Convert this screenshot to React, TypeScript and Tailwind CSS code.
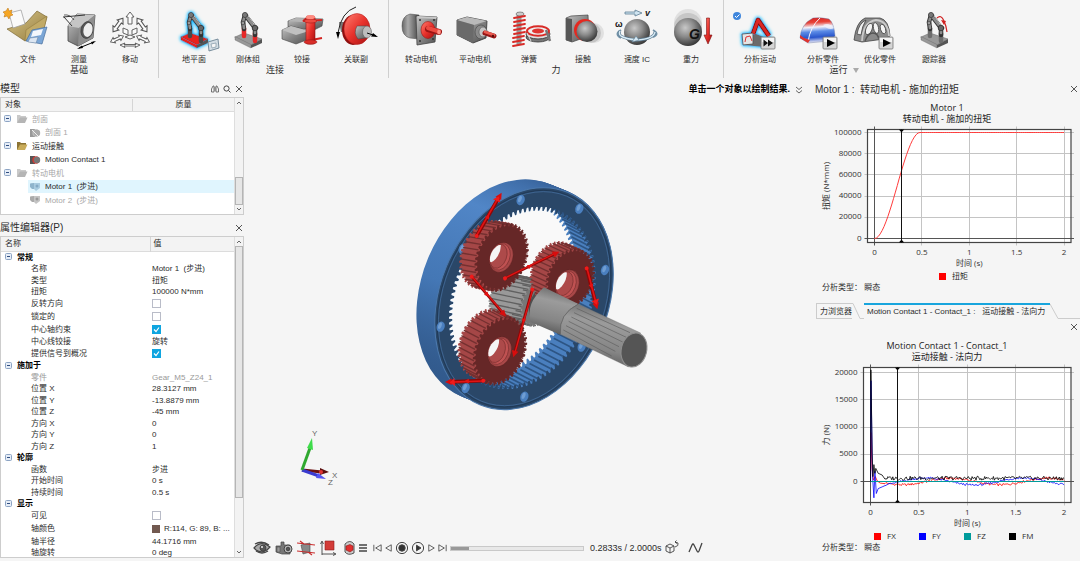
import { useState } from "react";
import type { ReactNode } from "react";
import clsx from "clsx";

type Tool = { label: string; icon: ReactNode; width?: string };
type Group = { title: string; tools: Tool[]; className: string; more?: boolean };
type Point = [number, number];

type TreeItem = {
  label: string;
  kind: "folder" | "section" | "contact" | "motor";
  muted?: boolean;
  selected?: boolean;
};

type Property = {
  name: string;
  value?: string;
  checked?: boolean;
  header?: boolean;
  muted?: boolean;
  swatch?: boolean;
};

const TREE: TreeItem[] = [
  { label: "剖面", kind: "folder", muted: true },
  { label: "剖面 1", kind: "section", muted: true },
  { label: "运动接触", kind: "folder" },
  { label: "Motion Contact 1", kind: "contact" },
  { label: "转动电机", kind: "folder", muted: true },
  { label: "Motor 1\u00a0 (步进)", kind: "motor", selected: true },
  { label: "Motor 2\u00a0 (步进)", kind: "motor", muted: true },
];

const PROPERTIES: Property[] = [
  { name: "常规", header: true },
  { name: "名称", value: "Motor 1\u00a0 (步进)" },
  { name: "类型", value: "扭矩" },
  { name: "扭矩", value: "100000 N*mm" },
  { name: "反转方向", checked: false },
  { name: "锁定的", checked: false },
  { name: "中心轴约束", checked: true },
  { name: "中心线铰接", value: "旋转" },
  { name: "提供信号到概况", checked: true },
  { name: "施加于", header: true },
  { name: "零件", value: "Gear_M5_Z24_1", muted: true },
  { name: "位置 X", value: "28.3127 mm" },
  { name: "位置 Y", value: "-13.8879 mm" },
  { name: "位置 Z", value: "-45 mm" },
  { name: "方向 X", value: "0" },
  { name: "方向 Y", value: "0" },
  { name: "方向 Z", value: "1" },
  { name: "轮廓", header: true },
  { name: "函数", value: "步进" },
  { name: "开始时间", value: "0 s" },
  { name: "持续时间", value: "0.5 s" },
  { name: "显示", header: true },
  { name: "可见", checked: false },
  { name: "轴颜色", value: "R:114, G: 89, B: ...", swatch: true },
  { name: "轴半径", value: "44.1716 mm" },
  { name: "轴旋转", value: "0 deg" },
];

// Gradients shared by every icon
function SharedDefs() {
  return (
    <svg className="absolute h-0 w-0" aria-hidden="true">
      <defs>
        <linearGradient id="metal" x1="0" y1="0" x2="1" y2="1">
          <stop offset="0" stopColor="#c4c4c4" />
          <stop offset="0.5" stopColor="#858585" />
          <stop offset="1" stopColor="#505050" />
        </linearGradient>
        <linearGradient id="metalX" x1="0" y1="0" x2="1" y2="0">
          <stop offset="0" stopColor="#666" />
          <stop offset="0.35" stopColor="#aaa" />
          <stop offset="1" stopColor="#444" />
        </linearGradient>
        <linearGradient id="red" x1="0" y1="0" x2="1" y2="1">
          <stop offset="0" stopColor="#ff8072" />
          <stop offset="0.5" stopColor="#e8322c" />
          <stop offset="1" stopColor="#a50f0f" />
        </linearGradient>
        <linearGradient id="gold" x1="0" y1="0" x2="1" y2="1">
          <stop offset="0" stopColor="#d9c88c" />
          <stop offset="1" stopColor="#93793a" />
        </linearGradient>
        <linearGradient id="heat" x1="0.1" y1="0" x2="0.2" y2="1">
          <stop offset="0" stopColor="#d81e1c" />
          <stop offset="0.22" stopColor="#e8453a" />
          <stop offset="0.4" stopColor="#f2f2fa" />
          <stop offset="0.58" stopColor="#5b8be6" />
          <stop offset="0.8" stopColor="#2a56cc" />
          <stop offset="1" stopColor="#e6e6f4" />
        </linearGradient>
        <radialGradient id="ball" cx="0.4" cy="0.35" r="0.65">
          <stop offset="0" stopColor="#c8c8c8" />
          <stop offset="0.5" stopColor="#8a8a8a" />
          <stop offset="1" stopColor="#3c3c3c" />
        </radialGradient>
        <filter id="glow" x="-40%" y="-40%" width="180%" height="180%">
          <feDropShadow dx="0" dy="0" stdDeviation="1.5" floodColor="#00b4ff" />
          <feDropShadow dx="0" dy="0" stdDeviation="1.5" floodColor="#3cc8ff" />
        </filter>
      </defs>
    </svg>
  );
}

function ToolSvg({ children }: { children: ReactNode }) {
  return (
    <svg viewBox="0 0 48 44" className="h-11 w-12 overflow-visible" aria-hidden="true">
      {children}
    </svg>
  );
}

function RobotArm({ base, legs }: { base: string; legs: string }) {
  return (
    <g strokeLinejoin="round" strokeLinecap="round">
      <path d="M11 29 20 25 38 31 27 37Z" fill={base} stroke="#555" strokeWidth=".4" />
      <path d="M11 29v3l16 8v-3z" fill={base} stroke="#444" strokeWidth=".3" />
      <path d="M27 37v3l11-5v-4z" fill="#555" />
      <path d="M20 28v-8M31 33v-8" stroke={legs} strokeWidth="4.5" />
      <path d="M20 21 19 14 21 7 31 20v7" stroke="#333" strokeWidth="4.5" fill="none" />
      <path d="M20 20 19 14 21 7 31 20v5" stroke="#8c8c8c" strokeWidth="2.6" fill="none" />
      <path d="m20 6 2-1 10 14" stroke="#bbb" strokeWidth="1" fill="none" />
      <circle cx="21" cy="7" r="2.6" fill="#777" stroke="#333" strokeWidth=".7" />
      <circle cx="19" cy="15" r="1.8" fill="#999" stroke="#333" strokeWidth=".6" />
      <circle cx="31" cy="20" r="2.8" fill="#666" stroke="#222" strokeWidth=".7" />
    </g>
  );
}

function PlayBox({ x, fast }: { x: number; fast?: boolean }) {
  return (
    <g transform={`translate(${x} 29)`}>
      <rect width="14" height="12" rx="1" fill="#d5d5d5" stroke="#777" strokeWidth=".8" />
      <rect x="1" y="1" width="12" height="4" fill="#f4f4f4" />
      {fast ? (
        <path d="M2.5 2.5 7 6 2.5 9.500zM7 2.500 12 6 7 9.500z" fill="#111" />
      ) : (
        <path d="M4 2 12 6 4 10z" fill="#000" />
      )}
    </g>
  );
}

const OUTLINE_ARROW = "M0-7 3-3H1.300V3H3L0 7-3 3H-1.300V-3H-3Z";

const fileIcon = (
  <ToolSvg>
    <path d="M3 21 22 15 33 3 43 9 40 20 21 33Z" fill="url(#gold)" stroke="#7d6935" strokeWidth=".7" />
    <path d="M22 22 43 8 40 21 21 33Z" fill="#c1aa67" stroke="#8b7439" strokeWidth=".5" />
    <path d="M22 33 28 22 43 19 38 36Z" fill="#7ba6d6" stroke="#476f9e" strokeWidth=".7" />
    <path d="M29 23 39 21 37 27 27 29Z" fill="#f3f7fc" />
    <path d="M26 30 34 29 32 35 24 34Z" fill="#dce6f2" stroke="#56718f" strokeWidth=".4" />
    <path d="M5 5 17 2 21 16 9 20Z" fill="#fafafa" stroke="#999" strokeWidth=".7" />
    <path d="m4 0 1 3 3-1-1 3 2 2-3 1-1 3-2-3-3 1 1-3-2-2 3-1z" fill="#f6a623" stroke="#b86e0a" strokeWidth=".5" />
  </ToolSvg>
);

const measureIcon = (
  <ToolSvg>
    <path d="M13 18 22 6 40 7 38 30 23 38 13 33Z" fill="url(#metal)" stroke="#444" strokeWidth=".8" />
    <path d="M13 18 22 6 40 7 24 20Z" fill="#c5c5c5" />
    <path d="M24 20 40 7 38 30 23 38Z" fill="#8f8f8f" />
    <ellipse cx="32" cy="22" rx="6" ry="8.500" fill="#555" stroke="#333" strokeWidth=".6" transform="rotate(12 32 22)" />
    <ellipse cx="33" cy="22" rx="4.500" ry="7" fill="#eee" transform="rotate(12 33 22)" />
    <path d="M8 9 30 7M9 9l8 9" stroke="#222" strokeWidth=".9" fill="none" />
    <path d="M9 7q6-1 10 5" stroke="#222" strokeWidth=".7" fill="none" />
    <path d="M24 40 39 34" stroke="#000" strokeWidth="1" />
    <path d="m22 41 5-3.500 1 2.500zM41 33l-5 1 1 2.500z" />
  </ToolSvg>
);

const moveIcon = (
  <ToolSvg>
    <g fill="#fbfbfb" stroke="#555" strokeWidth=".9">
      <path d="M24 4 28 9H26V16H22V9H20Z" />
      <path d={OUTLINE_ARROW} transform="translate(12 17) rotate(36) scale(1.2)" />
      <path d={OUTLINE_ARROW} transform="translate(36 17) rotate(-36) scale(1.2)" />
      <path d={OUTLINE_ARROW} transform="translate(11 31) rotate(66)" />
      <path d={OUTLINE_ARROW} transform="translate(37 31) rotate(-66)" />
      <path d="M14 37 19 35 18 36.500H30L29 35 34 37 29 39.500 30 38H18L19 39.500Z" />
      <path d="M17 20 22 22V27L17 25ZM31 20 26 22V27L31 25Z" />
      <path d="M19 29 24 27 29 29 24 31Z" />
    </g>
  </ToolSvg>
);

const groundIcon = (
  <ToolSvg>
    <g filter="url(#glow)">
      <RobotArm base="#e8201f" legs="#4a4a4a" />
    </g>
    <path d="M38 34 48 31 49 40 39 43Z" fill="#d3dde4" stroke="#6d8494" strokeWidth=".9" />
    <path d="m41 36 5-1v4l-4 1z" fill="#f6f6f6" stroke="#8097a5" strokeWidth=".7" />
  </ToolSvg>
);

const rigidIcon = (
  <ToolSvg>
    <RobotArm base="#999" legs="#e52828" />
  </ToolSvg>
);

const hingeIcon = (
  <ToolSvg>
    <path d="M10 13 18 10 45 11 44 18 36 22 10 19Z" fill="url(#metal)" stroke="#444" strokeWidth=".6" />
    <path d="M10 13 18 10 45 11 36 15Z" fill="#b4b4b4" />
    <path d="M4 22 13 18 31 23 31 31 18 36 4 31Z" fill="url(#metal)" stroke="#444" strokeWidth=".6" />
    <path d="M4 22 13 18 31 23 18 27Z" fill="#c0c0c0" />
    <path d="M30 10q-6 3-4 3l18-1M28 33l16-3" stroke="#d3221f" strokeWidth="2" fill="none" />
    <rect x="28" y="8" width="9" height="28" rx="2" fill="url(#red)" stroke="#921212" strokeWidth=".6" />
    <ellipse cx="32.500" cy="13" rx="6.500" ry="2" fill="#ed4a40" stroke="#921212" strokeWidth=".5" />
    <ellipse cx="32.500" cy="34" rx="6.500" ry="2.200" fill="#d82d28" stroke="#921212" strokeWidth=".5" />
    <ellipse cx="32.500" cy="9" rx="4.500" ry="2" fill="#ff8b80" />
  </ToolSvg>
);

const coupleIcon = (
  <ToolSvg>
    <path d="M7 14h8v10H9z" fill="#777" />
    <ellipse cx="21" cy="22" rx="11" ry="15" fill="#8f0e0e" />
    <ellipse cx="25" cy="21" rx="13" ry="15.500" fill="url(#red)" stroke="#b11b1b" strokeWidth=".5" />
    <path d="M25 18 34 18q6 5 0 12l-8 1q-5-6-1-13z" fill="url(#metal)" stroke="#444" strokeWidth=".5" />
    <ellipse cx="35" cy="24" rx="4.500" ry="6" fill="#bdbdbd" stroke="#555" strokeWidth=".5" />
    <path d="M35 25 44 28" stroke="#000" strokeWidth="1" />
    <path d="m46 29-7-.5 2-3.500z" />
    <path d="M24-1Q9 4 6 25" stroke="#222" strokeWidth="1" fill="none" />
    <path d="m6 31-2-7h4z" />
  </ToolSvg>
);

const rotaryIcon = (
  <ToolSvg>
    <path d="M22 7 13 6Q5 8 5 18t8 12l9 1z" fill="url(#metalX)" stroke="#444" strokeWidth=".5" />
    <path d="M19 8 40 9 38 34 20 37Z" fill="url(#metal)" stroke="#444" strokeWidth=".8" strokeLinejoin="round" />
    <path d="m20 8 20 1-1 2-18-1z" fill="#c8c8c8" />
    <circle cx="23" cy="12" r="1" fill="#333" />
    <circle cx="37" cy="12" r="1" fill="#333" />
    <circle cx="23" cy="33" r="1" fill="#333" />
    <circle cx="36" cy="31" r="1" fill="#333" />
    <ellipse cx="31" cy="22" rx="7" ry="8.500" fill="url(#red)" stroke="#9b1414" strokeWidth=".6" />
    <path d="M31 21 42 24" stroke="#9b1414" strokeWidth="6" strokeLinecap="round" />
    <path d="M31 20 42 23.500" stroke="#ec4a40" strokeWidth="4" strokeLinecap="round" />
    <ellipse cx="42" cy="24" rx="1.800" ry="2.600" fill="#ff9488" />
  </ToolSvg>
);

const linearIcon = (
  <ToolSvg>
    <path d="M6 12 16 9 36 13 35 30 22 35 6 27Z" fill="url(#metal)" stroke="#333" strokeWidth=".8" strokeLinejoin="round" />
    <path d="M6 12 16 9 36 13 23 17Z" fill="#b9b9b9" />
    <path d="M6 12 23 17 22 35 6 27Z" fill="#6a6a6a" />
    <ellipse cx="30" cy="24" rx="6" ry="7" fill="#8b8b8b" stroke="#444" strokeWidth=".6" />
    <ellipse cx="32" cy="24" rx="4" ry="5" fill="#c5c5c5" stroke="#555" strokeWidth=".6" />
    <path d="M34 25 43 28" stroke="#971616" strokeWidth="5" strokeLinecap="round" />
    <path d="M34 24 43 27" stroke="#e85a4f" strokeWidth="2.800" strokeLinecap="round" />
    <circle cx="42" cy="28" r="1.200" fill="#5a0a0a" />
  </ToolSvg>
);

const springIcon = (
  <ToolSvg>
    <path d="M14 7V37" stroke="#999" strokeWidth="5" />
    <ellipse cx="15" cy="6" rx="4" ry="2" fill="#ccc" stroke="#555" strokeWidth=".6" />
    <path
      d="M9 10 20 8M9 14 20 12M9 18 20 16M9 22 20 20M9 26 20 24M8 30 19 28M8 34 19 32M8 38 19 36"
      stroke="#d82b27"
      strokeWidth="1.800"
      strokeLinecap="round"
    />
    <ellipse cx="33" cy="29" rx="12" ry="5" fill="#777" stroke="#333" strokeWidth=".8" />
    <ellipse cx="33" cy="26" rx="12" ry="5" fill="#ddd" stroke="#444" strokeWidth="1" />
    <ellipse cx="33" cy="23" rx="11" ry="4.800" fill="#eee" stroke="#d82b27" strokeWidth="2" />
    <ellipse cx="33" cy="23" rx="6" ry="2.500" fill="#e03530" />
    <path d="M41 22 45 33" stroke="#777" strokeWidth="2.500" />
    <path d="m22 25 4 8" stroke="#ddd" strokeWidth="1" />
  </ToolSvg>
);

const contactIcon = (
  <ToolSvg>
    <path d="M7 10 12 8 29 7 30 28 13 34 7 32Z" fill="url(#metal)" stroke="#444" strokeWidth=".7" />
    <path d="M7 10 13 11 13 34 7 32Z" fill="#565656" />
    <circle cx="35" cy="25" r="10" fill="#bbb" opacity=".35" />
    <circle cx="32" cy="25" r="10" fill="#999" opacity=".4" />
    <circle cx="26" cy="22" r="11" fill="#e5281f" />
    <circle cx="28" cy="23.500" r="10.500" fill="url(#ball)" />
  </ToolSvg>
);

const velocityIcon = (
  <ToolSvg>
    <path d="M8 22q-7 4 0 8M40 22q7 4 0 7" stroke="#7292a8" strokeWidth="2" fill="none" />
    <circle cx="24" cy="24" r="13" fill="url(#ball)" />
    <path d="M7 23q-4 7 17 9 17-1 18-8" stroke="#5d7d94" strokeWidth="2.800" fill="none" />
    <path d="M7 23q-4 7 17 9 17-1 18-8" stroke="#d8ebf6" strokeWidth="1.500" fill="none" />
    <path d="m23 28 3 4-7 2z" fill="#d8ebf6" stroke="#5d7d94" strokeWidth=".6" />
    <path d="M12 4H22V2L29 5 22 8V6H12Z" fill="#cfe4f0" stroke="#5d7d94" strokeWidth=".8" />
    <text x="32" y="8" fontSize="9" fontWeight="700" fontStyle="italic" fill="#222">v</text>
    <text x="2" y="19" fontSize="9" fontWeight="700" fill="#222">ω</text>
  </ToolSvg>
);

const gravityIcon = (
  <ToolSvg>
    <circle cx="21" cy="15" r="14" fill="#bbb" opacity=".35" />
    <circle cx="21" cy="19" r="14" fill="#999" opacity=".35" />
    <circle cx="21" cy="24" r="14" fill="url(#ball)" />
    <text x="22" y="31" fontSize="14" fontWeight="700" fontStyle="italic" fill="#111">G</text>
    <path d="M39.500 10H42.500V27H45L41 36 37 27H39.500Z" fill="url(#red)" stroke="#7e1010" strokeWidth=".6" />
  </ToolSvg>
);

const runMotionIcon = (
  <ToolSvg>
    <g filter="url(#glow)">
      <path d="M8 30 20 26 38 33 28 39 8 37Z" fill="#6a6a6a" />
      <path d="M17 26 22 12 33 28" stroke="#7d1010" strokeWidth="5" fill="none" strokeLinejoin="round" />
      <path d="M17 26 22 12 33 28" stroke="#dd2722" strokeWidth="3" fill="none" strokeLinejoin="round" />
      <path d="M6 26 17 25 17 36 7 37Z" fill="#e5e5e5" stroke="#555" strokeWidth=".9" />
    </g>
    <path d="m9 34 1-5 4-1 2 5" stroke="#d33" strokeWidth="1" fill="none" />
    <PlayBox x={25} fast />
    <circle cx="1" cy="8" r="4" fill="#3f86dc" />
    <path d="m-1 8 1.500 1.500L3.500 6.500" stroke="#fff" strokeWidth="1" fill="none" />
  </ToolSvg>
);

const runPartIcon = (
  <ToolSvg>
    <path d="M1 30Q2 16 14 10 21 9 30 11 35 15 36 28L30 33 9 35Z" fill="url(#heat)" stroke="#5b6c9c" strokeWidth=".4" />
    <path d="M9 34Q11 19 21 10" stroke="#f6f6ff" strokeWidth="1" fill="none" />
    <path d="M24 17q6-3 11 3-5 3-11-3z" fill="#f3f3fb" opacity=".8" />
    <path d="M1 30 1 27 5 30 11 32 9 35Z" fill="#e0342d" />
    <PlayBox x={24} />
  </ToolSvg>
);

const optimizeIcon = (
  <ToolSvg>
    <path d="M-2 32Q0 14 9 10H24Q33 12 34 28L28 31 6 34Z" fill="#8a8a8a" stroke="#444" strokeWidth=".8" />
    <path d="M6 33Q7 14 20 12 32 13 33 28" stroke="#c9c9c9" strokeWidth="1.800" fill="none" />
    <g fill="#f3f3f3" stroke="#444" strokeWidth=".8">
      <path d="M1 26Q3 15 10 12 6 18 5 27Z" />
      <ellipse cx="13" cy="21" rx="3" ry="6" transform="rotate(22 13 21)" />
      <ellipse cx="20" cy="20" rx="2.500" ry="5.500" transform="rotate(-12 20 20)" />
      <ellipse cx="27" cy="21" rx="2.500" ry="5" transform="rotate(-18 27 21)" />
    </g>
    <path d="M9 33q3-8 8-8t6 7" stroke="#555" strokeWidth="1.500" fill="none" />
    <PlayBox x={23} />
  </ToolSvg>
);

const trackerIcon = (
  <ToolSvg>
    <RobotArm base="#999" legs="#6c6c6c" />
    <path d="M27 10q4-4 7 3 2 4 3 11" stroke="#cf2020" strokeWidth="1.200" fill="none" />
    <path d="m31 12 5 1-2 4z" fill="#cf2020" />
  </ToolSvg>
);

const GROUPS: Group[] = [
  {
    title: "基础",
    className: "w-[159px] border-r",
    tools: [
      { label: "文件", icon: fileIcon, width: "w-[51px]" },
      { label: "测量", icon: measureIcon, width: "w-[51px]" },
      { label: "移动", icon: moveIcon, width: "w-[51px]" },
    ],
  },
  {
    title: "连接",
    className: "w-[230px] border-r pl-[3px]",
    tools: [
      { label: "地平面", icon: groundIcon },
      { label: "刚体组", icon: rigidIcon },
      { label: "铰接", icon: hingeIcon },
      { label: "关联副", icon: coupleIcon },
    ],
  },
  {
    title: "力",
    className: "w-[335px] border-r",
    tools: [
      { label: "转动电机", icon: rotaryIcon },
      { label: "平动电机", icon: linearIcon },
      { label: "弹簧", icon: springIcon },
      { label: "接触", icon: contactIcon },
      { label: "速度 IC", icon: velocityIcon },
      { label: "重力", icon: gravityIcon },
    ],
  },
  {
    title: "运行",
    className: "w-[240px]",
    more: true,
    tools: [
      { label: "分析运动", icon: runMotionIcon, width: "w-[66px]" },
      { label: "分析零件", icon: runPartIcon, width: "w-[60px]" },
      { label: "优化零件", icon: optimizeIcon },
      { label: "跟踪器", icon: trackerIcon },
    ],
  },
];

function Ribbon() {
  return (
    <header className="flex h-20 shrink-0">
      {GROUPS.map((group) => (
        <section
          key={group.title}
          className={clsx("flex h-[78px] shrink-0 flex-col items-center border-[#cfcfcf] pt-2", group.className)}
        >
          <div className="flex">
            {group.tools.map((tool) => (
              <button key={tool.label} className={clsx("flex flex-col items-center", tool.width ?? "w-[54px]")}>
                {tool.icon}
                <span className="text-[8px] leading-4 whitespace-nowrap">{tool.label}</span>
              </button>
            ))}
          </div>
          <h2 className="-mt-1 flex items-center gap-[5px] text-[9px] leading-3">
            {group.title}
            {group.more && (
              <svg viewBox="0 0 6 5" className="h-[5px] w-[6px]" aria-hidden="true">
                <path d="M0 0h6L3 5z" fill="#aaa" />
              </svg>
            )}
          </h2>
        </section>
      ))}
    </header>
  );
}

function CloseIcon() {
  return (
    <svg viewBox="0 0 8 8" className="h-2 w-2" aria-hidden="true">
      <path d="M1 1 7 7M7 1 1 7" stroke="#555" strokeWidth="1" />
    </svg>
  );
}

function PanelTitle({ title, search }: { title: string; search?: boolean }) {
  return (
    <div className="flex h-[17px] shrink-0 items-center gap-1 pr-px">
      <h2 className="grow text-[10px] leading-4">{title}</h2>
      {search && (
        <>
          <button aria-label="查找">
            <svg viewBox="0 0 8 8" className="h-2 w-2" fill="none" stroke="#555" aria-hidden="true">
              <path d="M.5 7V4L2 1h1v6M7.500 7V4L6 1H5v6M.5 7H3M5 7h2.500M3 3h2M3 5h2" strokeWidth=".8" />
            </svg>
          </button>
          <button aria-label="搜索">
            <svg viewBox="0 0 8 8" className="h-2 w-2" fill="none" stroke="#444" aria-hidden="true">
              <circle cx="3.500" cy="3.500" r="2.600" />
              <path d="m5.500 5.500 2 2" />
            </svg>
          </button>
        </>
      )}
      <button aria-label="关闭">
        <CloseIcon />
      </button>
    </div>
  );
}

function ScrollBar({ before, thumb }: { before: string; thumb: string }) {
  return (
    <div className="flex w-[9px] shrink-0 flex-col items-center border-l border-[#dedede] bg-[#f3f3f3]">
      <svg viewBox="0 0 8 9" className="h-[9px] w-2 shrink-0" aria-hidden="true">
        <path d="m2 6 2-2 2 2" fill="none" stroke="#666" />
      </svg>
      <div className={before} />
      <div className={clsx("w-full border border-[#b5b5b5] bg-[#e6e6e6]", thumb)} />
      <div className="grow" />
      <svg viewBox="0 0 8 9" className="h-[9px] w-2 shrink-0" aria-hidden="true">
        <path d="m2 3 2 2 2-2" fill="none" stroke="#666" />
      </svg>
    </div>
  );
}

function Toggle() {
  return (
    <svg viewBox="0 0 8 8" className="h-2 w-2 shrink-0" aria-hidden="true">
      <rect x=".5" y=".5" width="6" height="6" rx="1" fill="#e6edf7" stroke="#8da4c4" />
      <path d="M2 3.500H5" stroke="#2f4d80" />
    </svg>
  );
}

function TreeIcon({ item }: { item: TreeItem }) {
  if (item.kind === "folder") {
    return (
      <svg viewBox="0 0 12 10" className="h-[10px] w-3 shrink-0" aria-hidden="true">
        <path d="M1 9V1h3l1 1h5v2" fill={item.muted ? "#c9c9c9" : "#8d7434"} />
        <path d="M1 9 4 3.500h7.500L9 9z" fill={item.muted ? "#b5b5b5" : "#c9ac5a"} />
      </svg>
    );
  }
  if (item.kind === "motor") {
    return (
      <svg viewBox="0 0 12 10" className="h-[10px] w-3 shrink-0" aria-hidden="true">
        <path d="M1 2q0-1 4-1v6H3L1 5z" fill={item.selected ? "#8fb4cc" : "#aaa"} />
        <path d="M5 1h6v5L7 9 5 7z" fill={item.selected ? "#a9cbe0" : "#c4c4c4"} />
        <circle cx="8" cy="4" r="1.500" fill={item.selected ? "#84a9c4" : "#999"} />
      </svg>
    );
  }
  return (
    <svg viewBox="0 0 12 10" className="h-[10px] w-3 shrink-0" aria-hidden="true">
      <path d="M1 1h5v8H1z" fill={item.muted ? "#999" : "#555"} />
      <circle cx="7" cy="5" r="3.700" fill={item.muted ? "#bbb" : "#d23a34"} />
      <circle cx="8" cy="5" r="3.200" fill={item.muted ? "#aaa" : "#777"} />
      {item.muted && <path d="m3 2 6 6" stroke="#eee" />}
    </svg>
  );
}

function ModelTree() {
  return (
    <section>
      <PanelTitle title="模型" search />
      <div className="flex h-[118px] border border-[#cdcdcd] bg-white">
        <div className="min-w-0 grow">
          <div className="flex h-[14px] items-center border-b border-[#dcdcdc] bg-[#f3f3f3] text-[8px]">
            <span className="w-[131px] pl-1">对象</span>
            <span className="grow border-l border-[#d5d5d5] text-center">质量</span>
          </div>
          <ul role="tree" className="text-[8px] leading-[13px]">
            {TREE.map((item) => (
              <li
                key={item.label}
                role="treeitem"
                aria-selected={!!item.selected}
                className={clsx("flex odd:h-[14px] even:h-[13px]", item.muted && "text-[#a8a8a8]")}
              >
                {item.kind === "folder" ? (
                  <div className="flex items-center gap-1 pl-[3px]">
                    <Toggle />
                    <TreeIcon item={item} />
                    <span>{item.label}</span>
                  </div>
                ) : (
                  <div className={clsx("ml-[27px] flex grow items-center gap-1 pl-px", item.selected && "bg-[#e0f5fe]")}>
                    <TreeIcon item={item} />
                    <span>{item.label}</span>
                  </div>
                )}
              </li>
            ))}
          </ul>
        </div>
        <ScrollBar before="h-[71px]" thumb="h-7" />
      </div>
    </section>
  );
}

function PropertyValue({ row }: { row: Property }) {
  const [checked, setChecked] = useState(!!row.checked);
  if (row.checked !== undefined) {
    return (
      <span className="relative flex">
        <input
          id={row.name}
          type="checkbox"
          checked={checked}
          onChange={(e) => setChecked(e.target.checked)}
          className="h-[9px] w-[9px] appearance-none border border-[#b9bcc8] bg-white checked:border-[#0fa5e0] checked:bg-[#0fa5e0]"
        />
        {checked && (
          <svg viewBox="0 0 9 9" className="pointer-events-none absolute h-[9px] w-[9px]" aria-hidden="true">
            <path d="m2 4.500 2 2 3-4" fill="none" stroke="#fff" strokeWidth="1.200" />
          </svg>
        )}
      </span>
    );
  }
  return (
    <span className="flex items-center">
      {row.swatch && <span className="mr-1 h-2 w-2 bg-[#725950]" />}
      {row.value}
    </span>
  );
}

function PropertyEditor() {
  return (
    <section className="mt-1 flex grow flex-col">
      <PanelTitle title="属性编辑器(P)" />
      <div className="flex h-[322px] grow overflow-hidden border border-[#cdcdcd] bg-white">
        <table className="grow table-fixed border-collapse self-start text-left text-[8px] leading-[11px]">
          <thead>
            <tr className="h-[14px] border-b border-[#dcdcdc] bg-[#f3f3f3]">
              <th className="w-[149px] p-0 pl-1 font-normal">名称</th>
              <th className="border-l border-[#d5d5d5] p-0 pl-[3px] font-normal">值</th>
            </tr>
          </thead>
          <tbody>
            {PROPERTIES.map((row) => (
              <tr
                key={row.name}
                className={clsx(
                  row.checked !== undefined || row.swatch ? "h-[13px]" : "odd:h-3 even:h-[11px]",
                  row.muted && "text-[#999]"
                )}
              >
                {row.header ? (
                  <th colSpan={2} className="p-0 pl-1">
                    <span className="flex items-center gap-1 font-bold text-black">
                      <Toggle />
                      {row.name}
                    </span>
                  </th>
                ) : (
                  <>
                    <td className="p-0 pl-[30px]">
                      {row.checked !== undefined ? <label htmlFor={row.name}>{row.name}</label> : row.name}
                    </td>
                    <td className="p-0 pl-[2px]">
                      <PropertyValue row={row} />
                    </td>
                  </>
                )}
              </tr>
            ))}
          </tbody>
        </table>
        <ScrollBar before="h-0" thumb="h-[252px]" />
      </div>
    </section>
  );
}

// Ellipses seen in perspective all share the same tilt
const TILT = (22.6 * Math.PI) / 180;

function onEllipse(cx: number, cy: number, rx: number, ry: number, a: number): Point {
  const x = rx * Math.cos(a);
  const y = ry * Math.sin(a);
  return [cx + x * Math.cos(TILT) - y * Math.sin(TILT), cy + x * Math.sin(TILT) + y * Math.cos(TILT)];
}

function toothed(cx: number, cy: number, rx: number, ry: number, teeth: number, depth: number) {
  const points: string[] = [];
  for (let i = 0; i < teeth; i++) {
    [0, 0.3, 0.5, 0.8].forEach((f, k) => {
      const s = k < 2 ? 1 : 1 - depth;
      const [x, y] = onEllipse(cx, cy, rx * s, ry * s, ((i + f) / teeth) * Math.PI * 2);
      points.push(`${x.toFixed(1)},${y.toFixed(1)}`);
    });
  }
  return points.join(" ");
}

type GearProps = { cx: number; cy: number; rx: number; ry: number; teeth: number; dx: number; dy: number; face: string; side: string; line: string };

function Gear({ cx, cy, rx, ry, teeth, dx, dy, face, side, line }: GearProps) {
  const layers = [1, 0.8, 0.6, 0.4, 0.2];
  return (
    <g>
      {layers.map((f) => (
        <polygon key={f} points={toothed(cx + dx * f, cy + dy * f, rx, ry, teeth, 0.1)} fill={side} />
      ))}
      {Array.from({ length: teeth }, (_, i) => {
        const [x, y] = onEllipse(cx, cy, rx * 0.96, ry * 0.96, ((i + 0.65) / teeth) * Math.PI * 2);
        return <path key={i} d={`M${x} ${y}l${dx} ${dy}`} stroke={line} strokeWidth="4" />;
      })}
      <polygon points={toothed(cx, cy, rx, ry, teeth, 0.1)} fill={face} />
    </g>
  );
}

function GearBore({ cx, cy }: { cx: number; cy: number }) {
  return (
    <g transform={`translate(${cx} ${cy}) rotate(20)`}>
      <ellipse rx="34" ry="46" fill="#a94848" stroke="#4d1c1c" strokeWidth="1" />
      <ellipse cx="-4" rx="29" ry="41" fill="#c05252" stroke="#7c3030" strokeWidth="2" />
      <ellipse cx="-9" rx="24" ry="37" fill="#ad4a4a" stroke="#7c3030" strokeWidth="2" />
      <path d="M-31-12Q-24-34-14-34-6-14-14 10-20 26-27 24-36 8-31-12Z" fill="#f5f5f5" />
    </g>
  );
}

const BOLTS: Point[] = [[362, 90], [538, 116], [615, 300], [545, 530], [373, 680], [197, 654], [122, 470], [188, 237]];

const FORCES: [Point, Point, boolean][] = [
  [[230, 198], [305, 68], true],
  [[315, 325], [478, 245], false],
  [[560, 295], [592, 418], true],
  [[215, 320], [318, 440], false],
  [[397, 358], [340, 562], false],
  [[250, 632], [135, 636], true],
];

function ForceArrow({ from, to, double }: { from: Point; to: Point; double: boolean }) {
  const length = Math.hypot(to[0] - from[0], to[1] - from[1]);
  const angle = (Math.atan2(to[1] - from[1], to[0] - from[0]) * 180) / Math.PI;
  return (
    <g transform={`translate(${from[0]} ${from[1]}) rotate(${angle})`}>
      <path d={`M0 0H${length - 16}`} stroke="#8f0606" strokeWidth={double ? 11 : 8} strokeLinecap="round" />
      <path d={`M0-1H${length - 16}`} stroke="#e01414" strokeWidth={double ? 5 : 4} strokeLinecap="round" />
      <path d={`M${length} 0l-20-10v20z`} fill="#d80d0d" />
      {double && <path d={`M${length - 14}-2l-16-11 2 24z`} fill="#f01a1a" />}
      <path d={`M${length / 2} 0l-14-7v14z`} fill="#e51212" />
      <circle r="6" fill="#f01a1a" />
    </g>
  );
}

function GearTrain() {
  const red = { rx: 76, ry: 108, teeth: 36, face: "#662727", side: "#a54747", line: "#743030" };
  return (
    <svg viewBox="0 0 780 750" className="h-[250px] w-[260px]" role="img" aria-label="行星齿轮">
      <defs>
        <linearGradient id="rim" x1="0.6" y1="0" x2="0.2" y2="1">
          <stop offset="0" stopColor="#355f96" />
          <stop offset="0.35" stopColor="#5186c7" />
          <stop offset="0.7" stopColor="#4477b5" />
          <stop offset="1" stopColor="#2c5180" />
        </linearGradient>
        <linearGradient id="shaft" x1="0.6" y1="0" x2="0.35" y2="1">
          <stop offset="0" stopColor="#666" />
          <stop offset="0.3" stopColor="#9b9b9b" />
          <stop offset="0.7" stopColor="#858585" />
          <stop offset="1" stopColor="#555" />
        </linearGradient>
        <clipPath id="hole">
          <polygon points={toothed(367, 384, 207, 284, 96, 0.045)} />
        </clipPath>
      </defs>

      {/* Ring gear, swept from back to front */}
      {Array.from({ length: 12 }, (_, i) => (
        <ellipse
          key={i}
          cx={317 + i * 5}
          cy={361 + i * 2}
          rx="252"
          ry="345"
          transform={`rotate(22.6 ${317 + i * 5} ${361 + i * 2})`}
          fill="url(#rim)"
        />
      ))}
      <ellipse cx="372" cy="386" rx="252" ry="345" transform="rotate(22.6 372 386)" fill="#2a4768" stroke="#4b78ac" strokeWidth="3" />
      <ellipse cx="372" cy="386" rx="245" ry="337" transform="rotate(22.6 372 386)" fill="none" stroke="#1d3551" strokeWidth="2" />
      <ellipse cx="372" cy="386" rx="241" ry="333" transform="rotate(22.6 372 386)" fill="none" stroke="#456f9f" strokeWidth="2" />
      {BOLTS.map(([x, y]) => (
        <g key={x}>
          <ellipse cx={x} cy={y} rx="12" ry="16" transform={`rotate(20 ${x} ${y})`} fill="#4a7fbf" />
          <ellipse cx={x - 3} cy={y - 2} rx="5" ry="10" transform={`rotate(20 ${x} ${y})`} fill="#6f9dd2" />
        </g>
      ))}
      <g clipPath="url(#hole)">
        <rect width="780" height="750" fill="#4a7fbe" />
        {Array.from({ length: 96 }, (_, i) => {
          const [x, y] = onEllipse(367, 384, 207, 284, ((i + 0.4) / 96) * Math.PI * 2);
          return <path key={i} d={`M${x} ${y}l-58-30`} stroke="#2d5584" strokeWidth="5" />;
        })}
        <polygon points={toothed(309, 350, 205, 281, 96, 0.045)} fill="#f9f9f9" />
      </g>

      {/* Sun gear sits behind the planets */}
      <Gear cx={414} cy={400} rx={48} ry={74} teeth={26} dx={-96} dy={-20} face="#777" side="#999" line="#606060" />
      <ellipse cx="424" cy="402" rx="34" ry="54" transform="rotate(22 424 402)" fill="#4e4e4e" />

      <Gear {...red} cx={305} cy={262} dx={-46} dy={-8} />
      <GearBore cx={304} cy={262} />
      <Gear {...red} cx={511} cy={326} rx={70} ry={94} dx={-48} dy={-22} />
      <GearBore cx={502} cy={344} />
      <Gear {...red} cx={300} cy={543} dx={-46} dy={-24} />
      <GearBore cx={299} cy={545} />

      <path d="M432 352 540 404 481 494 392 456Q376 400 432 352Z" fill="url(#shaft)" />
      <path d="M535 402 722 489 686 591 481 493Q475 432 535 402Z" fill="url(#shaft)" stroke="#666" strokeWidth="1" />
      {Array.from({ length: 6 }, (_, i) => (
        <path key={i} d={`M${530 - i * 8} ${415 + i * 13}l${160 - i * 3} ${73 + i}`} stroke="#5e5e5e" strokeWidth="2" />
      ))}
      <path d="M535 402Q475 432 481 493" fill="none" stroke="#606060" strokeWidth="2" />
      <ellipse cx="702" cy="540" rx="38" ry="52" transform="rotate(14 702 540)" fill="#555" stroke="#8f8f8f" strokeWidth="3" />

      {FORCES.map(([from, to, double], i) => (
        <ForceArrow key={i} from={from} to={to} double={double} />
      ))}
    </svg>
  );
}

function AxisTriad() {
  return (
    <svg viewBox="0 0 48 60" className="h-[60px] w-12" aria-hidden="true">
      <path d="M6 42 26 44" stroke="#6b1010" strokeWidth="3" />
      <path d="m33 44-9-4v7z" fill="#5b0d0d" />
      <circle cx="25" cy="44" r="2" fill="#e03535" />
      <path d="M6 42 23 48" stroke="#3a3ad0" strokeWidth="3" />
      <path d="m30 51-10-1 2-5z" fill="#5555f2" />
      <path d="M6 42 14 20" stroke="#2fa82f" strokeWidth="3" />
      <path d="M16 10 11 20l6 2z" fill="#3fdc4b" />
      <g fontSize="8" fill="#666">
        <text x="16" y="8">Y</text>
        <text x="36" y="50">X</text>
        <text x="32" y="57">Z</text>
      </g>
    </svg>
  );
}

function BarIcon({ label, className, children }: { label: string; className?: string; children: ReactNode }) {
  return (
    <button aria-label={label} className={className}>
      <svg viewBox="0 0 18 16" className="h-4 w-[18px]" fill="none" stroke="#444" aria-hidden="true">
        {children}
      </svg>
    </button>
  );
}

function StepButton({ label, d, round }: { label: string; d: string; round?: ReactNode }) {
  return (
    <button aria-label={label}>
      <svg viewBox="0 0 12 14" className={clsx("h-[14px]", round ? "w-4" : "w-[11px]")} fill="none" stroke="#444" aria-hidden="true">
        <path d={d} strokeWidth=".9" />
        {round}
      </svg>
    </button>
  );
}

function PlaybackBar() {
  const [time, setTime] = useState(0.2833);
  const filled = Math.round((time / 2) * 100);
  return (
    <div className="flex h-[26px] items-center pl-[9px]">
      <div className="flex items-center gap-1">
        <BarIcon label="显示">
          <path d="M1 8Q8 0 17 7 10 15 3 10Z" fill="#aaa" strokeWidth="1.200" />
          <path d="M2 4Q9 0 16 5M3 11q6 4 12 0" strokeWidth="1.300" />
          <circle cx="10" cy="8" r="3" fill="#555" />
          <circle cx="9" cy="7" r="1" fill="#eee" stroke="none" />
        </BarIcon>
        <BarIcon label="视图">
          <path d="M1 6h5V2h3v3h6v9H7l-6-2z" fill="#777" strokeWidth=".7" />
          <path d="M2 7h3v5H2z" fill="#999" strokeWidth=".5" />
          <circle cx="13" cy="9" r="4" fill="#bbb" />
          <circle cx="13" cy="9" r="1.800" fill="#555" />
        </BarIcon>
        <BarIcon label="剖切">
          <path d="M4 5 13 3v9l-7 2z" fill="#888" strokeWidth=".6" />
          <path d="M0 3 18 5M0 11l18 2M3 1l4 3M11 12l4 3" stroke="#c92c2c" strokeWidth="1.100" />
        </BarIcon>
        <BarIcon label="坐标系">
          <path d="M6 1h9v9H6z" fill="#d33c38" stroke="#8d1d1d" strokeWidth=".6" />
          <path d="M3 15V2M3 14h13M1.500 4 3 1l1.500 3M14 12.500l3 1.500-3 1.500" strokeWidth=".9" />
        </BarIcon>
        <BarIcon label="旋转中心" className="-mr-2">
          <path d="M4 4q5-5 9 0v9q-6 3-9-1z" fill="#ccc" strokeWidth=".9" />
          <path d="m5 6 4-1.500L12 6v4l-3 2-4-2z" fill="#e02f2f" stroke="#8d1515" strokeWidth=".6" />
        </BarIcon>
        <BarIcon label="菜单" className="-mr-1">
          <path d="M4 5h8M4 8h8M4 11h8" strokeWidth="1.300" />
        </BarIcon>
      </div>
      <div className="ml-[3px] flex items-center">
        <StepButton label="开头" d="M2 3.500V10.500M10 3.500 4 7 10 10.500Z" />
        <StepButton label="后退" d="M9 3.500 3 7 9 10.500Z" />
        <StepButton label="记录" d="M0 0" round={<><circle cx="6" cy="7" r="5.600" /><circle cx="6" cy="7" r="3.200" fill="#333" /></>} />
        <StepButton label="播放" d="M0 0" round={<><circle cx="6" cy="7" r="5.600" /><path d="M4.500 4.200 9 7 4.500 9.800Z" fill="#333" /></>} />
        <StepButton label="前进" d="M3 3.500 9 7 3 10.500Z" />
        <StepButton label="结尾" d="M10 3.500V10.500M2 3.500 8 7 2 10.500Z" />
      </div>
      <input
        type="range"
        aria-label="时间"
        min={0}
        max={2}
        step={0.0001}
        value={time}
        onChange={(e) => setTime(Number(e.target.value))}
        className="ml-[2px] h-[5px] w-[134px] appearance-none border border-[#c9c9c9] [&::-webkit-slider-thumb]:h-0 [&::-webkit-slider-thumb]:w-0 [&::-webkit-slider-thumb]:appearance-none"
        style={{ background: `linear-gradient(to right, #999 ${filled}%, #e8e8e8 ${filled}%)` }}
      />
      <span className="ml-[6px] w-[68px] text-[9px] leading-3 whitespace-nowrap">{time.toFixed(4)}s / 2.0000s</span>
      <BarIcon label="重置视图" className="ml-[5px]">
        <path d="m3 6 4-2 4 2v5l-4 2-4-2zM3 6l4 2 4-2M7 8v5" strokeWidth=".9" />
        <path d="M12 7q4-1 3-4l-3-1M13.500.5 12 2l2 1.500" strokeWidth=".9" />
      </BarIcon>
      <BarIcon label="绘图" className="ml-[6px]">
        <path d="M2 12 5 5q1-2 2 0l3 6q1 2 2 0l3-8" strokeWidth="1.300" />
      </BarIcon>
    </div>
  );
}

function Viewport() {
  return (
    <main className="flex min-w-0 grow flex-col">
      <p className="flex h-5 items-center justify-end gap-[5px] pr-[9px] text-[9px] font-bold text-black">
        单击一个对象以绘制结果.
        <svg viewBox="0 0 8 8" className="h-2 w-2" fill="none" stroke="#555" aria-hidden="true">
          <path d="m1 1 3 2.500L7 1M1 4.500 4 7l3-2.500" strokeWidth=".9" />
        </svg>
      </p>
      <div className="flex justify-center pt-[70px] pb-2 pl-1">
        <GearTrain />
      </div>
      <div className="grow pl-[52px]">
        <AxisTriad />
      </div>
      <PlaybackBar />
    </main>
  );
}

type Series = { name: string; color: string; points: Point[]; width?: number };

type ChartProps = {
  height: number;
  left: number;
  top: number;
  bottom: number;
  zero: Point;
  unit: Point;
  title: string;
  subtitle: string;
  yTitle: string;
  yTicks: number[];
  series: Series[];
};

function Chart({ height, left, top, bottom, zero, unit, title, subtitle, yTitle, yTicks, series }: ChartProps) {
  const right = 259;
  const px = (t: number) => zero[0] + t * unit[0];
  const py = (v: number) => zero[1] - v * unit[1];
  const cursor = Math.floor(px(0.2833)) + 0.5;
  return (
    <svg
      viewBox={`0 0 268 ${height}`}
      className="w-full font-['Open_Sans','Noto_Sans_CJK_SC',sans-serif]"
      role="img"
      aria-label={title}
      fill="#333"
      fontSize="8"
    >
      <g fontSize="9" fill="#222" textAnchor="middle">
        <text x="135" y={top - 19}>{title}</text>
        <text x="135" y={top - 8}>{subtitle}</text>
      </g>
      <rect x={left} y={top} width={right - left} height={bottom - top} fill="#fff" />
      <g stroke="#c4c4c4">
        {[0.5, 1, 1.5, 2].map((t) => (
          <path key={t} d={`M${Math.floor(px(t)) + 0.5} ${top - 3}V${bottom + 3}`} />
        ))}
        {yTicks.slice(1).map((v) => (
          <path key={v} d={`M${left - 3} ${Math.floor(py(v)) + 0.5}H${right + 3}`} />
        ))}
      </g>
      <path d={`M${px(0)} ${top - 3}V${bottom + 3}M${left - 3} ${py(0)}H${right + 3}`} stroke="#555" />
      {series.map((s) => (
        <polyline
          key={s.name}
          points={s.points.map(([t, v]) => `${px(t).toFixed(1)},${py(v).toFixed(1)}`).join(" ")}
          fill="none"
          stroke={s.color}
          strokeWidth={s.width ?? 0.8}
        />
      ))}
      <rect x={left} y={top} width={right - left} height={bottom - top} fill="none" stroke="#444" strokeWidth="1.200" />
      <path d={`M${cursor} ${top}V${bottom}`} stroke="#111" />
      <path d={`M${cursor - 2.5} ${top}h5l-1.500 2h-2zM${cursor - 2.5} ${bottom}h5l-1.500-2h-2z`} fill="#000" />
      <g textAnchor="end">
        {yTicks.map((v) => (
          <text key={v} x={left - 6} y={py(v) + 2}>{v}</text>
        ))}
      </g>
      <g textAnchor="middle">
        {[0, 0.5, 1, 1.5, 2].map((t) => (
          <text key={t} x={px(t)} y={bottom + 12}>{t}</text>
        ))}
        <text x={(px(0) + px(2)) / 2} y={bottom + 23}>时间 (s)</text>
        <text transform={`translate(17 ${(top + bottom) / 2}) rotate(-90)`}>{yTitle}</text>
      </g>
    </svg>
  );
}

function Legend({ series, className }: { series: Series[]; className: string }) {
  return (
    <ul className={clsx("flex h-3 items-center font-['Open_Sans','Noto_Sans_CJK_SC',sans-serif] text-[8px]", className)}>
      {series.map((s) => (
        <li key={s.name} className="flex w-[45px] items-center gap-[6px]">
          <svg viewBox="0 0 7 7" className="h-[7px] w-[7px]" aria-hidden="true">
            <rect width="7" height="7" fill={s.color} />
          </svg>
          {s.name}
        </li>
      ))}
    </ul>
  );
}

// Smooth step from 0 to 100000 during the first half second
const torque: Series[] = [
  {
    name: "扭矩",
    color: "#ff3b3b",
    width: 1,
    points: Array.from({ length: 101 }, (_, i) => {
      const t = i / 50;
      const s = Math.min(t / 0.48, 1);
      return [t, 100000 * s * s * (3 - 2 * s)] as Point;
    }),
  },
];

const noise = (i: number, seed: number) => {
  const v = Math.sin(i * 12.9898 + seed * 78.233) * 43758.5453;
  return (v - Math.floor(v)) * 2 - 1;
};

function forceSeries(start: Point[], value: (t: number, i: number) => number): Point[] {
  const rest = Array.from({ length: 186 }, (_, i) => {
    const t = 0.15 + i / 100;
    return [t, value(t, i)] as Point;
  });
  return [...start, ...rest];
}

const forces: Series[] = [
  {
    name: "FX",
    color: "#ff0000",
    points: forceSeries(
      [[0, 0], [0.004, 9000], [0.015, 2500], [0.03, 300], [0.05, 900], [0.07, 100], [0.1, -300]],
      (t, i) => -600 * Math.cos(2 * Math.PI * (t - 0.33)) + noise(i, 1) * 220
    ),
  },
  {
    name: "FY",
    color: "#0000ff",
    points: forceSeries(
      [[0, 0], [0.005, 18500], [0.02, 1500], [0.035, -3000], [0.045, 1900], [0.06, -2200], [0.08, -1300], [0.12, -1000]],
      (t, i) => 640 * Math.cos(2 * Math.PI * (t - 0.57)) + noise(i, 2) * 200
    ),
  },
  { name: "FZ", color: "#009b9b", width: 1, points: [[0, 0], [2, 0]] },
  {
    name: "FM",
    color: "#000000",
    points: forceSeries(
      [[0, 0], [0.004, 20500], [0.018, 5000], [0.025, 900], [0.035, 3100], [0.045, 1500], [0.055, 2400], [0.08, 1500], [0.12, 1200]],
      (t, i) => 600 + noise(i, 3) * 380
    ),
  },
];

function ResultPlots() {
  return (
    <aside className="flex w-[268px] shrink-0 flex-col">
      <div className="flex h-[18px] items-center pr-[2px] pl-[3px]">
        <h2 className="grow text-[10px] whitespace-nowrap">Motor 1 :&nbsp; 转动电机 - 施加的扭矩</h2>
        <button aria-label="关闭"><CloseIcon /></button>
      </div>
      <div className="pt-[2px]">
        <Chart
          height={170}
          left={55.5}
          top={29.5}
          bottom={142.5}
          zero={[62.5, 138.5]}
          unit={[94.8, 0.00106]}
          title="Motor 1"
          subtitle="转动电机 - 施加的扭矩"
          yTitle="扭矩 (N*mm)"
          yTicks={[0, 20000, 40000, 60000, 80000, 100000]}
          series={torque}
        />
        <Legend series={[{ ...torque[0], color: "#ff0000" }]} className="ml-[127px]" />
        <p className="pl-[10px] text-[8px] leading-3">分析类型： 瞬态</p>
      </div>

      <div role="tablist" className="mt-[9px] ml-1 flex h-4 items-stretch text-[8px] whitespace-nowrap">
        <button role="tab" aria-selected="false" className="flex items-center border-t border-b border-l border-[#ccc] pt-px pl-[3px]">
          力浏览器
        </button>
        <svg viewBox="0 0 12 16" className="h-4 w-3" fill="none" stroke="#ccc" aria-hidden="true">
          <path d="M0 .5H1L8 15.500H12" />
        </svg>
        <button role="tab" aria-selected="true" className="flex w-[186px] items-center border-t-2 border-[#18a5dd] pl-[3px]">
          Motion Contact 1 - Contact_1 :&nbsp;&nbsp; 运动接触 - 法向力
        </button>
        <svg viewBox="0 0 30 16" className="h-4 w-[30px]" fill="none" stroke="#ccc" aria-hidden="true">
          <path d="M0 1 8 15.500H30" />
        </svg>
      </div>
      <div className="flex h-4 items-center justify-end pr-[2px]">
        <button aria-label="关闭"><CloseIcon /></button>
      </div>
      <Chart
        height={195}
        left={51.5}
        top={32.5}
        bottom={167.5}
        zero={[58.5, 146.5]}
        unit={[96.8, 0.00545]}
        title="Motion Contact 1 - Contact_1"
        subtitle="运动接触 - 法向力"
        yTitle="力 (N)"
        yTicks={[0, 5000, 10000, 15000, 20000]}
        series={forces}
      />
      <Legend series={forces} className="ml-[62px]" />
      <p className="pl-[10px] text-[8px] leading-3">分析类型： 瞬态</p>
    </aside>
  );
}

export default function App() {
  return (
    <div className="flex min-h-screen flex-col bg-[#f5f5f5] font-['Liberation_Sans','Noto_Sans_CJK_SC',sans-serif] text-[#2c2c2c]">
      <SharedDefs />
      <Ribbon />
      <div className="flex grow">
        <div className="flex w-[244px] shrink-0 flex-col pb-[3px]">
          <ModelTree />
          <PropertyEditor />
        </div>
        <Viewport />
        <ResultPlots />
      </div>
    </div>
  );
}
